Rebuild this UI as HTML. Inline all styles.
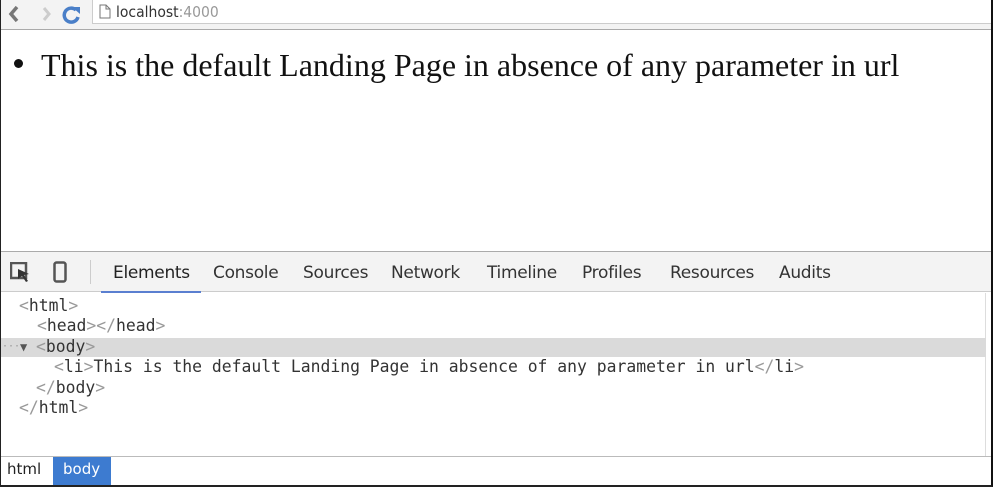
<!DOCTYPE html>
<html><head><style>
*{margin:0;padding:0;box-sizing:border-box}
body{width:993px;height:487px;overflow:hidden;background:#fff;position:relative;font-family:"Liberation Sans",sans-serif}
.frame{position:absolute;left:0;top:0;width:993px;height:487px;border-left:1px solid #222;border-right:2px solid #111;border-bottom:2px solid #222;pointer-events:none}
.tb{position:absolute;left:0;top:0;width:993px;height:30px;background:#f3f3f3;border-bottom:1px solid #aaa}
.omni{position:absolute;left:92px;top:0;width:901px;height:24px;background:#fff;border-left:1px solid #ccc;border-bottom:1px solid #ccc}
.url{position:absolute;left:116px;top:3px;font-size:15.5px;color:#333;font-family:"DejaVu Sans Condensed","Liberation Sans Narrow",sans-serif}
.url span{color:#999}
.page{position:absolute;left:14px;top:47px;font-family:"Liberation Serif",serif;font-size:32px;color:#111;white-space:nowrap}
.page .dot{display:inline-block;width:9px;height:9px;border-radius:50%;background:#111;position:relative;top:-8px;margin-right:18px}
.dt{position:absolute;left:0;top:251px;width:993px;height:41px;background:#f3f3f3;border-top:1px solid #aaa;border-bottom:1px solid #ccc}
.tab{position:absolute;top:11px;font-size:17px;color:#333;font-family:"DejaVu Sans","Liberation Sans",sans-serif;letter-spacing:-0.3px}
.el{position:absolute;left:0;top:293px;width:986px;height:163px;font-family:"DejaVu Sans Mono","Liberation Mono",monospace;font-size:16.4px;color:#333;border-right:1px solid #ddd}
.row{position:absolute;height:20px;line-height:20px;white-space:pre}
.g{color:#999}
.sel{position:absolute;left:0;top:45px;width:986px;height:19px;background:#dadada}
.bc{position:absolute;left:0;top:456px;width:991px;height:29px;border-top:1px solid #bbb;font-family:"DejaVu Sans","Liberation Sans",sans-serif;font-size:15px}
</style></head><body>
<div class="tb"></div>
<svg style="position:absolute;left:6px;top:4px" width="80" height="20">
<path d="M11 3 L5 10 L11 17" stroke="#777" stroke-width="3.5" fill="none"/>
<path d="M38 4 L43 10 L38 16" stroke="#ccc" stroke-width="3" fill="none"/>
<path d="M70 6 A7 7 0 1 0 72 13" stroke="#4a7fc8" stroke-width="3.5" fill="none"/><path d="M66 3 L74 3 L74 10 Z" fill="#4a7fc8"/>
</svg>
<div class="omni"></div>
<svg style="position:absolute;left:99px;top:4px" width="12" height="15"><path d="M1 1 H7 L11 5 V14 H1 Z M7 1 V5 H11" stroke="#777" fill="#fff"/></svg>
<div class="url">localhost<span>:4000</span></div>
<div class="page"><span class="dot"></span>This is the default Landing Page in absence of any parameter in url</div>
<div class="dt">
<svg style="position:absolute;left:10px;top:10px" width="22" height="22"><rect x="1" y="1" width="15" height="15" fill="none" stroke="#555" stroke-width="2.5"/><path d="M8 7 L19 12 L14 13 L18 19 L16 20 L12 14 L8 17 Z" fill="#333"/></svg>
<svg style="position:absolute;left:53px;top:9px" width="14" height="22"><rect x="1.5" y="1.5" width="11" height="19" rx="2" fill="none" stroke="#555" stroke-width="2.5"/></svg>
<div style="position:absolute;left:90px;top:8px;width:1px;height:24px;background:#ccc"></div>
<div class="tab" style="left:113px;color:#222">Elements</div>
<div style="position:absolute;left:101px;top:39px;width:100px;height:2px;background:#5a7fd0"></div>
<div class="tab" style="left:213px">Console</div>
<div class="tab" style="left:303px">Sources</div>
<div class="tab" style="left:391px">Network</div>
<div class="tab" style="left:487px">Timeline</div>
<div class="tab" style="left:582px">Profiles</div>
<div class="tab" style="left:670px">Resources</div>
<div class="tab" style="left:779px">Audits</div>
</div>
<div class="el">
<div class="sel"></div>
<div class="row" style="left:19px;top:3px"><span class="g">&lt;</span>html<span class="g">&gt;</span></div>
<div class="row" style="left:37px;top:23px"><span class="g">&lt;</span>head<span class="g">&gt;&lt;/</span>head<span class="g">&gt;</span></div>
<div class="row" style="left:2px;top:44px;color:#999;font-size:10px">···</div>
<div class="row" style="left:20px;top:44px;font-size:12px;color:#555">▼</div>
<div class="row" style="left:36px;top:44px"><span class="g">&lt;</span>body<span class="g">&gt;</span></div>
<div class="row" style="left:54px;top:64px"><span class="g">&lt;</span>li<span class="g">&gt;</span>This is the default Landing Page in absence of any parameter in url<span class="g">&lt;/</span>li<span class="g">&gt;</span></div>
<div class="row" style="left:36px;top:85px"><span class="g">&lt;/</span>body<span class="g">&gt;</span></div>
<div class="row" style="left:19px;top:105px"><span class="g">&lt;/</span>html<span class="g">&gt;</span></div>
</div>
<div class="bc">
<div style="position:absolute;left:7px;top:3px;color:#222">html</div>
<div style="position:absolute;left:53px;top:0;width:58px;height:28px;background:#3d7bd0;color:#fff;padding:3px 0 0 10px">body</div>
</div>
<div class="frame"></div>
</body></html>
